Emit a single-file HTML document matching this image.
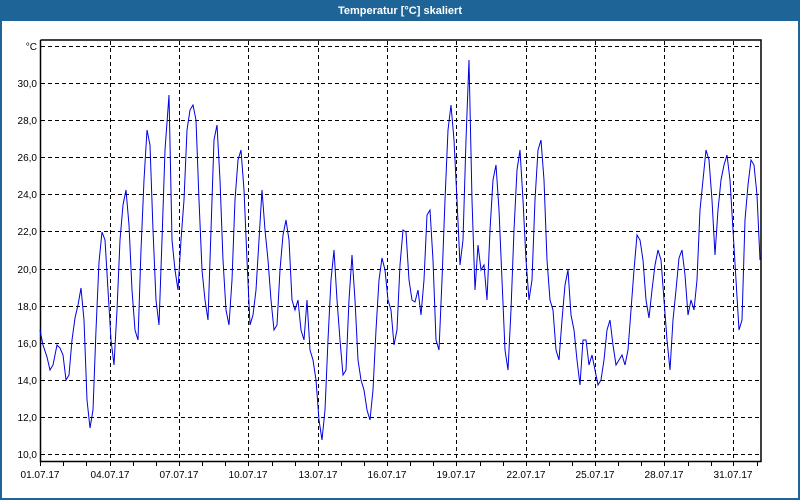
<!DOCTYPE html>
<html><head><meta charset="utf-8"><style>
body{margin:0;width:800px;height:500px;overflow:hidden;background:#fff;font-family:"Liberation Sans",sans-serif}
</style></head><body>
<svg width="800" height="500" xmlns="http://www.w3.org/2000/svg" style="display:block">
<rect x="0" y="0" width="800" height="500" fill="#1e6496"/>
<rect x="2" y="21" width="796" height="477" fill="#fff"/>
<text x="400" y="14" fill="#fff" font-size="11" font-weight="bold" text-anchor="middle" font-family="Liberation Sans">Temperatur [°C] skaliert</text>
<g stroke="#000" stroke-width="1" stroke-dasharray="4,3" fill="none">
<line x1="41" x2="760" y1="46.5" y2="46.5"/>
<line x1="41" x2="760" y1="83.5" y2="83.5"/>
<line x1="41" x2="760" y1="120.5" y2="120.5"/>
<line x1="41" x2="760" y1="157.5" y2="157.5"/>
<line x1="41" x2="760" y1="194.5" y2="194.5"/>
<line x1="41" x2="760" y1="231.5" y2="231.5"/>
<line x1="41" x2="760" y1="269.5" y2="269.5"/>
<line x1="41" x2="760" y1="306.5" y2="306.5"/>
<line x1="41" x2="760" y1="343.5" y2="343.5"/>
<line x1="41" x2="760" y1="380.5" y2="380.5"/>
<line x1="41" x2="760" y1="417.5" y2="417.5"/>
<line x1="41" x2="760" y1="454.5" y2="454.5"/>
<line y1="41" y2="460" x1="110.5" x2="110.5"/>
<line y1="41" y2="460" x1="179.5" x2="179.5"/>
<line y1="41" y2="460" x1="248.5" x2="248.5"/>
<line y1="41" y2="460" x1="318.5" x2="318.5"/>
<line y1="41" y2="460" x1="387.5" x2="387.5"/>
<line y1="41" y2="460" x1="456.5" x2="456.5"/>
<line y1="41" y2="460" x1="526.5" x2="526.5"/>
<line y1="41" y2="460" x1="595.5" x2="595.5"/>
<line y1="41" y2="460" x1="664.5" x2="664.5"/>
<line y1="41" y2="460" x1="733.5" x2="733.5"/>
</g>
<path d="M40.5 40V461.5H761V40H40.5" fill="none" stroke="#000" stroke-width="1.5"/>
<g stroke="#000">
<path d="M63.5 461v5M86.5 461v5M110.5 461v5M133.5 461v5M156.5 461v5M179.5 461v5M202.5 461v5M225.5 461v5M248.5 461v5M272.5 461v5M295.5 461v5M318.5 461v5M341.5 461v5M364.5 461v5M387.5 461v5M410.5 461v5M433.5 461v5M456.5 461v5M480.5 461v5M503.5 461v5M526.5 461v5M549.5 461v5M572.5 461v5M595.5 461v5M618.5 461v5M641.5 461v5M664.5 461v5M688.5 461v5M711.5 461v5M733.5 461v5M757.5 461v5M40.5 461v5"/>
</g>
<polyline fill="none" stroke="#0000e0" stroke-width="1" points="40,330 43,345 47,357 50,370 53,365 57,345 60,348 63,355 66,380 69,375 72,340 75,318 78,305 81,288 84,320 87,400 90,428 93,410 96,330 99,262 102,232 105,240 108,290 111,340 114,365 117,310 120,240 123,205 126,190 129,225 132,290 135,330 138,340 141,250 144,180 147,130 150,145 153,230 156,300 159,325 162,240 165,150 169,95 172,240 175,270 178,290 181,240 184,200 187,130 190,110 193,105 196,120 199,200 202,270 205,300 208,320 211,230 214,140 217,125 220,180 223,260 226,310 229,325 232,280 235,200 238,160 241,150 244,190 247,260 250,325 253,315 256,290 259,240 262,190 265,230 268,260 271,300 274,330 277,325 280,270 283,235 286,220 289,240 292,300 295,310 298,300 301,330 304,340 307,300 310,350 313,360 316,380 319,420 322,440 325,410 328,340 331,280 334,250 337,300 340,340 343,375 346,370 349,300 352,255 355,300 358,360 361,380 364,390 367,410 370,420 373,390 376,330 379,280 382,258 385,270 388,300 391,310 394,345 397,330 400,265 403,230 406,232 409,280 412,300 415,302 418,290 421,315 424,280 427,215 430,210 433,260 436,340 439,350 442,280 445,200 448,130 451,105 454,140 457,200 460,265 463,240 466,140 469,60 472,200 475,290 478,245 481,270 484,265 487,300 490,230 493,180 496,165 499,210 502,280 505,350 508,370 511,310 514,230 517,170 520,150 523,200 526,260 529,300 532,280 535,200 538,150 541,140 544,180 547,260 550,300 553,310 556,350 559,360 562,320 565,285 568,270 571,315 574,330 577,360 580,385 583,340 586,340 589,365 592,355 595,370 598,385 601,380 604,360 607,330 610,320 613,345 616,365 619,360 622,355 625,365 628,350 631,310 634,270 637,235 640,240 643,260 646,300 649,318 652,290 655,265 658,250 661,260 664,300 667,340 670,370 673,320 676,290 679,258 682,250 685,275 688,315 691,300 694,310 697,280 700,210 703,180 706,150 709,160 712,200 715,255 718,210 721,180 724,165 727,155 730,180 733,230 736,280 739,330 742,320 745,220 748,185 751,160 754,165 757,195 760,260"/>
<g font-size="10" fill="#000" text-anchor="end" font-family="Liberation Sans">
<text x="37" y="50">°C</text>
<text x="37" y="87">30,0</text>
<text x="37" y="124">28,0</text>
<text x="37" y="161">26,0</text>
<text x="37" y="198">24,0</text>
<text x="37" y="235">22,0</text>
<text x="37" y="273">20,0</text>
<text x="37" y="310">18,0</text>
<text x="37" y="347">16,0</text>
<text x="37" y="384">14,0</text>
<text x="37" y="421">12,0</text>
<text x="37" y="458">10,0</text>
</g>
<g font-size="10" fill="#000" text-anchor="middle" font-family="Liberation Sans">
<text x="40" y="478">01.07.17</text>
<text x="110" y="478">04.07.17</text>
<text x="179" y="478">07.07.17</text>
<text x="248" y="478">10.07.17</text>
<text x="318" y="478">13.07.17</text>
<text x="387" y="478">16.07.17</text>
<text x="456" y="478">19.07.17</text>
<text x="526" y="478">22.07.17</text>
<text x="595" y="478">25.07.17</text>
<text x="664" y="478">28.07.17</text>
<text x="733" y="478">31.07.17</text>
</g>
</svg>
</body></html>
